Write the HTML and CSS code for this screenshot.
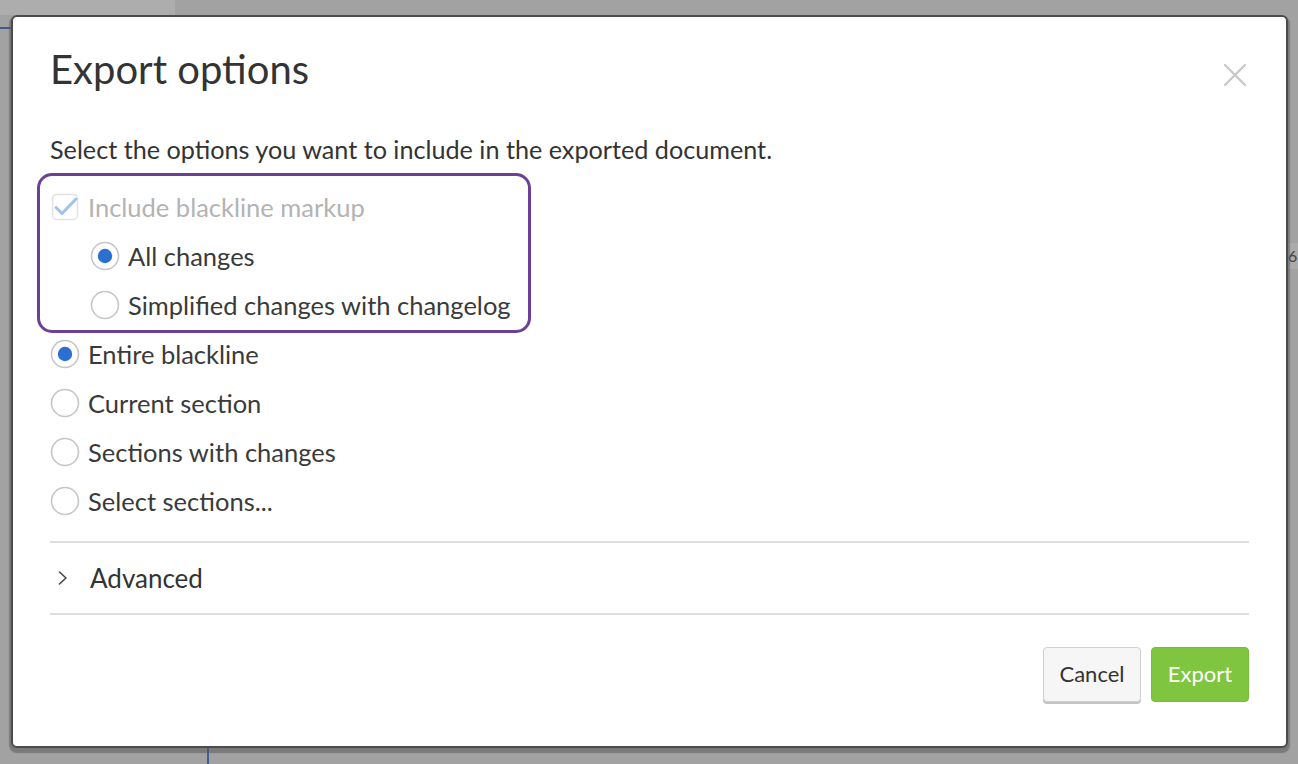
FILE: index.html
```html
<!DOCTYPE html>
<html lang="en">
<head>
<meta charset="utf-8">
<title>Export options</title>
<link rel="stylesheet" href="styles.css">
</head>
<body>
<div class="backdrop">
  <div class="bg-top-left"></div>
  <div class="bg-blue-line"></div>
  <div class="bg-bottom-line"></div>
  <div class="bg-right-tab">6</div>
  <div class="modal">
    <div class="header">
      <h1 class="title">Export options</h1>
      <button class="close" aria-label="Close">
        <svg width="24" height="24" viewBox="0 0 24 24"><path d="M2 2 L22 22 M22 2 L2 22" stroke="#c9c9c9" stroke-width="2.4" fill="none" stroke-linecap="round"/></svg>
      </button>
    </div>
    <p class="desc">Select the options you want to include in the exported document.</p>
    <div class="options">
      <div class="group">
        <div class="row disabled">
          <span class="icon">
            <svg width="28" height="28" viewBox="0 0 28 28"><rect x="1.5" y="1.5" width="25" height="25" rx="4" fill="#fff" stroke="#e2e2e2" stroke-width="1.5"/><path d="M5 14.5 L11 20.5 L25 6" stroke="#9fc2ec" stroke-width="3" fill="none" stroke-linecap="round" stroke-linejoin="round"/></svg>
          </span>
          <span class="label">Include blackline markup</span>
        </div>
        <div class="row nested">
          <span class="icon">
            <svg width="30" height="30" viewBox="0 0 30 30"><circle cx="15" cy="15" r="13.5" fill="#fff" stroke="#c6c6c6" stroke-width="1.6"/><circle cx="15" cy="15" r="7.2" fill="#2b6fd0"/></svg>
          </span>
          <span class="label">All changes</span>
        </div>
        <div class="row nested">
          <span class="icon">
            <svg width="30" height="30" viewBox="0 0 30 30"><circle cx="15" cy="15" r="13.5" fill="#fff" stroke="#c6c6c6" stroke-width="1.6"/></svg>
          </span>
          <span class="label">Simplified changes with changelog</span>
        </div>
      </div>
      <div class="row">
        <span class="icon">
          <svg width="30" height="30" viewBox="0 0 30 30"><circle cx="15" cy="15" r="13.5" fill="#fff" stroke="#c6c6c6" stroke-width="1.6"/><circle cx="15" cy="15" r="7.2" fill="#2b6fd0"/></svg>
        </span>
        <span class="label">Entire blackline</span>
      </div>
      <div class="row">
        <span class="icon">
          <svg width="30" height="30" viewBox="0 0 30 30"><circle cx="15" cy="15" r="13.5" fill="#fff" stroke="#c6c6c6" stroke-width="1.6"/></svg>
        </span>
        <span class="label">Current section</span>
      </div>
      <div class="row">
        <span class="icon">
          <svg width="30" height="30" viewBox="0 0 30 30"><circle cx="15" cy="15" r="13.5" fill="#fff" stroke="#c6c6c6" stroke-width="1.6"/></svg>
        </span>
        <span class="label">Sections with changes</span>
      </div>
      <div class="row">
        <span class="icon">
          <svg width="30" height="30" viewBox="0 0 30 30"><circle cx="15" cy="15" r="13.5" fill="#fff" stroke="#c6c6c6" stroke-width="1.6"/></svg>
        </span>
        <span class="label">Select sections...</span>
      </div>
    </div>
    <div class="advanced">
      <svg class="chevron" width="12" height="16" viewBox="0 0 12 16"><path d="M2.5 2 L9 8 L2.5 14" stroke="#444" stroke-width="1.6" fill="none" stroke-linecap="round" stroke-linejoin="round"/></svg>
      <span class="adv-label">Advanced</span>
    </div>
    <div class="footer">
      <button class="btn btn-cancel">Cancel</button>
      <button class="btn btn-export">Export</button>
    </div>
  </div>
</div>
</body>
</html>
```
FILE: styles.css
```css
* { box-sizing: border-box; }
html, body { margin: 0; padding: 0; }
body {
  width: 1298px;
  height: 764px;
  overflow: hidden;
  background: #a2a2a2;
  font-family: Lato, "Open Sans", "DejaVu Sans", sans-serif;
}
.backdrop {
  position: relative;
  width: 1298px;
  height: 764px;
  padding: 15px 0 0 11px;
}
.bg-top-left {
  position: absolute;
  left: 0; top: 0;
  width: 175px; height: 15px;
  background: #adadad;
}
.bg-blue-line {
  position: absolute;
  left: 0; top: 27px;
  width: 11px; height: 2px;
  background: #3d5e8e;
}
.bg-bottom-line {
  position: absolute;
  left: 207px; top: 748px;
  width: 2px; height: 16px;
  background: #3d5e8e;
}
.bg-right-tab {
  position: absolute;
  left: 1288px; top: 243px;
  width: 10px; height: 26px;
  font-size: 16px;
  color: #444;
  line-height: 26px;
  background: #ababab;
  overflow: hidden;
}
.modal {
  position: relative;
  width: 1277px;
  height: 733px;
  background: #fff;
  border: 2px solid #4b4b4b;
  border-radius: 6px;
  box-shadow: 0 3px 1px 2px rgba(90, 90, 90, 0.55);
  padding: 0 37px 0 37px;
  display: flex;
  flex-direction: column;
}
.header {
  display: flex;
  align-items: center;
  justify-content: space-between;
  height: 117px;
  padding-bottom: 13px;
}
.title {
  margin: 0;
  font-size: 40px;
  font-weight: 400;
  color: #333;
}
.close {
  border: 0;
  background: none;
  padding: 0;
  margin: 12px 2px 0 0;
  width: 24px;
  height: 24px;
  display: flex;
}
.desc {
  margin: 0;
  font-size: 25.2px;
  line-height: 30px;
  color: #333;
  height: 48px;
}
.options {
  display: flex;
  flex-direction: column;
  align-items: flex-start;
}
.group {
  position: relative;
  display: flex;
  flex-direction: column;
}
.group::after {
  content: "";
  position: absolute;
  left: -13px; top: -9px;
  right: -20px; bottom: -4px;
  border: 3.5px solid #6d3f99;
  border-radius: 15px;
  pointer-events: none;
}
.row {
  height: 49px;
  display: flex;
  align-items: center;
  gap: 8px;
  font-size: 25.5px;
  color: #3a3a3a;
}
.row .icon {
  width: 30px;
  height: 30px;
  display: flex;
  align-items: center;
  justify-content: center;
}
.row.nested { padding-left: 40px; }
.row.disabled { color: #b3b3b3; }
.advanced {
  margin-top: 16px;
  border-top: 2px solid #dedede;
  border-bottom: 2px solid #dedede;
  height: 74px;
  display: flex;
  align-items: center;
  padding-left: 7px;
  gap: 21px;
}
.adv-label {
  font-size: 26px;
  color: #333;
}
.footer {
  display: flex;
  justify-content: flex-end;
  gap: 10px;
  margin-top: 32px;
}
.btn {
  font-family: Lato, "Open Sans", sans-serif;
  font-size: 22px;
  height: 55px;
  width: 98px;
  border-radius: 4px;
  padding: 0 0 2px;
  cursor: pointer;
}
.btn-cancel {
  background: #f6f6f6;
  color: #333;
  border: 1.5px solid #cfcfcf;
  box-shadow: 0 2px 0 #c4c4c4;
}
.btn-export {
  background: #80c53f;
  color: #fff;
  border: 1px solid #78bb38;
}
```
